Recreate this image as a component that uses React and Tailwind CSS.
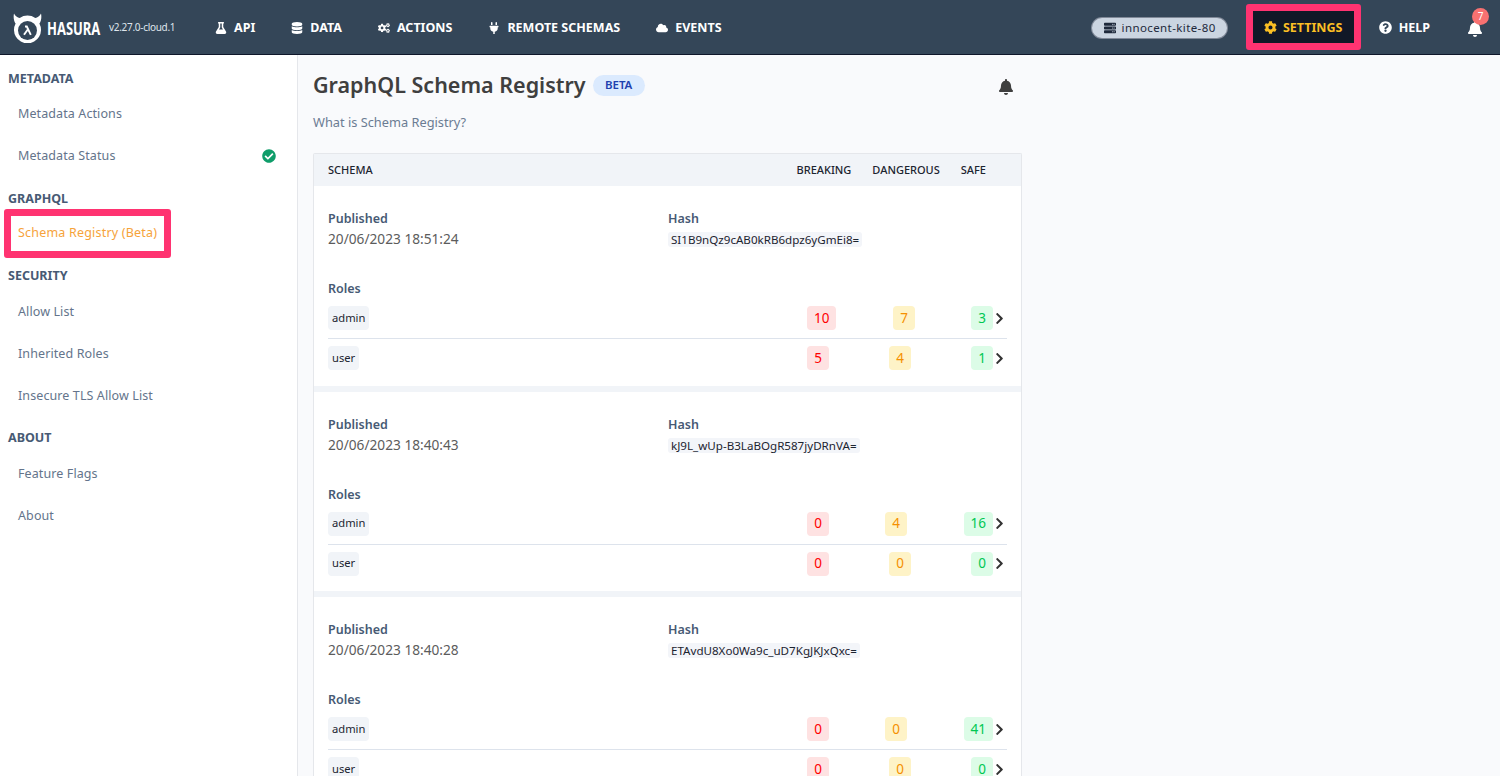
import React from "react";
import { FaFlask, FaDatabase, FaCogs, FaPlug, FaCloud, FaCog, FaQuestionCircle, FaBell, FaServer, FaCheckCircle, FaChevronRight } from "react-icons/fa";

const font = "font-['Noto_Sans',sans-serif]";

function Logo() {
  return (
    <svg width="29" height="30" viewBox="0 0 29 30" className="text-white shrink-0">
      <path d="M1 0.500 C0.200 4 0.800 8 2.600 10.500 A13.500 13.500 0 1 0 26.400 10.500 C28.200 8 28.800 4 28 0.500 C26.800 3.200 24.500 4.600 22.300 5 A13.500 13.500 0 0 0 6.700 5 C4.500 4.600 2.200 3.200 1 0.500Z" fill="currentColor" />
      <circle cx="14.500" cy="17.500" r="9.500" fill="#344658" />
      <path d="M12 13.500 H13.800 L17.800 21.800" fill="none" stroke="currentColor" strokeWidth="1.900" />
      <path d="M14.800 16.500 L11 21.800" fill="none" stroke="currentColor" strokeWidth="1.900" />
    </svg>
  );
}

function NavItem({ icon: Icon, label, size = 12, cls }) {
  return (
    <div className={`flex items-center gap-[7px] text-white font-bold text-[12.500px] ${cls}`}>
      <Icon size={size} />
      <span className="mt-[1px]">{label}</span>
    </div>
  );
}

function SideHead({ children }) {
  return <div className="text-[12.500px] font-bold text-[#475a74] leading-[18px] pl-[8px] uppercase">{children}</div>;
}

function SideItem({ children, right }) {
  return (
    <div className="flex items-center justify-between h-[42px] pl-[18px] pr-[21px] text-[12.500px] tracking-[0.1px] text-[#64748b]">
      <span>{children}</span>
      {right}
    </div>
  );
}

function Chip({ tone, children }) {
  const tones = {
    red: "bg-[#fee2e2] text-[#ff0000]",
    amber: "bg-[#fef3c7] text-[#f59000]",
    green: "bg-[#dcfce7] text-[#00c853]",
  };
  return <span className={`flex items-center justify-center h-[24px] rounded-[4px] text-[13.500px] px-[7px] min-w-[22px] ${tones[tone]}`}>{children}</span>;
}

function RoleRow({ role, b, d, s, dCls, last }) {
  return (
    <div className={`flex items-center ${last ? "h-[38px]" : "h-[41px] border-b border-[#dde3ec]"}`}>
      <span className="bg-[#f1f4f8] rounded-[4px] h-[24px] flex items-center px-[4px] text-[11.200px] text-[#1c2430]">{role}</span>
      <div className="ml-auto flex items-center w-[200px]">
        <div className="w-[60px] flex"><Chip tone="red">{b}</Chip></div>
        <div className={`w-[48px] flex justify-end ${dCls}`}><Chip tone="amber">{d}</Chip></div>
        <div className="w-[78px] flex justify-end"><Chip tone="green">{s}</Chip></div>
        <FaChevronRight size={13} className="text-[#333]" />
      </div>
    </div>
  );
}

function Item({ time, hash, rows, divider }) {
  return (
    <>
      <div className="bg-white h-[199.500px] px-[14px] pt-[24px]">
        <div className="flex">
          <div className="w-[340px]">
            <div className="text-[12.500px] font-semibold text-[#475a74] leading-[18px]">Published</div>
            <div className="text-[13.700px] text-[#5c5c5c] leading-[18px] mt-[2px]">{time}</div>
          </div>
          <div>
            <div className="text-[12.500px] font-semibold text-[#475a74] leading-[18px]">Hash</div>
            <div className="mt-[4px] w-fit bg-[#f3f5f9] rounded-[3px] px-[3px] h-[15px] leading-[15px] text-[11.600px] text-[#1c2430]">{hash}</div>
          </div>
        </div>
        <div className="mt-[32px] text-[12.500px] font-semibold text-[#475a74] leading-[18px]">Roles</div>
        <div>
          {rows.map((r, i) => <RoleRow key={r.role} {...r} last={i === rows.length - 1} />)}
        </div>
      </div>
      {divider && <div className="h-[6px] bg-[#f1f4f8]" />}
    </>
  );
}

export default function App() {
  return (
    <div className={`h-[776px] w-[1500px] overflow-hidden flex flex-col bg-[#f9fafc] ${font}`}>
      <header className="h-[55px] shrink-0 bg-[#344658] border-b border-[#0f172a] flex items-center pt-[1px] pl-[13px] pr-[17px]">
        <Logo />
        <span className="ml-[5px] w-[52px] inline-block whitespace-nowrap origin-left scale-x-[0.72] text-white font-bold text-[18px] leading-none">HASURA</span>
        <span className="ml-[10px] w-[66px] whitespace-nowrap text-[#dfe5ec] text-[10px] tracking-[-0.3px]">v2.27.0-cloud.1</span>
        <NavItem icon={FaFlask} label="API" cls="ml-[40px]" />
        <NavItem icon={FaDatabase} label="DATA" cls="ml-[36px]" />
        <NavItem icon={FaCogs} label="ACTIONS" cls="ml-[36px]" />
        <NavItem icon={FaPlug} label="REMOTE SCHEMAS" cls="ml-[36px]" />
        <NavItem icon={FaCloud} label="EVENTS" cls="ml-[36px]" />
        <div className="ml-auto flex items-center h-[22px] rounded-full bg-[#cbd5e1] border border-[#0f172a]/40 pl-[12px] pr-[11px] gap-[6px] text-[11.500px] tracking-[0.4px] text-[#1e293b]">
          <FaServer size={12} />
          <span>innocent-kite-80</span>
        </div>
        <div className="ml-[18px] -mt-[1px] flex items-center gap-[6px] h-[46px] w-[115px] justify-center rounded-[3px] border-[7px] border-[#ff3371] bg-[#111827] text-[#fbbf24] font-bold text-[12.500px]">
          <FaCog size={13} />
          <span className="mt-[2px]">SETTINGS</span>
        </div>
        <NavItem icon={FaQuestionCircle} label="HELP" size={13} cls="ml-[18px]" />
        <div className="relative ml-[37px] mt-[3px] text-white">
          <FaBell size={16} />
          <span className="absolute -top-[13px] left-[5px] w-[17px] h-[17px] rounded-full bg-[#f87171] text-white text-[10px] flex items-center justify-center">7</span>
        </div>
      </header>
      <div className="flex flex-1 min-h-0">
        <aside className="w-[298px] shrink-0 bg-white border-r border-[#e5e7eb] pt-[15px]">
          <SideHead>Metadata</SideHead>
          <div className="mt-[5px]">
            <SideItem>Metadata Actions</SideItem>
            <SideItem right={<FaCheckCircle size={14} className="text-[#0f9d6a]" />}>Metadata Status</SideItem>
          </div>
          <div className="mt-[13px]"><SideHead>GraphQL</SideHead></div>
          <div className="mt-[1px] ml-[4px] w-[167px] h-[49px] rounded-[3px] border-[7px] border-[#ff3371] flex items-center pl-[7px] text-[12.500px] tracking-[0.2px] text-[#f6a33b]">Schema Registry (Beta)</div>
          <div className="mt-[9px]"><SideHead>Security</SideHead></div>
          <div className="mt-[6px]">
            <SideItem>Allow List</SideItem>
            <SideItem>Inherited Roles</SideItem>
            <SideItem>Insecure TLS Allow List</SideItem>
          </div>
          <div className="mt-[12px]"><SideHead>About</SideHead></div>
          <div className="mt-[6px]">
            <SideItem>Feature Flags</SideItem>
            <SideItem>About</SideItem>
          </div>
        </aside>
        <main className="flex-1 min-w-0 pl-[15px] pt-[14px]">
          <div className="w-[709px]">
            <div className="flex items-center h-[32px]">
              <h1 className="text-[21.500px] font-semibold text-[#3f3f3f]">GraphQL Schema Registry</h1>
              <span className="ml-[7px] h-[21px] w-[52px] flex items-center justify-center rounded-full bg-[#dbeafe] text-[#1e40af] text-[11.500px] font-semibold">BETA</span>
              <FaBell size={16} className="ml-auto mr-[8px] mt-[4px] text-[#3f3f3f]" />
            </div>
            <p className="mt-[12px] text-[12.800px] text-[#6b7c93] leading-[18px]">What is Schema Registry?</p>
            <div className="mt-[22px] border border-[#e5e7eb] border-b-0 rounded-t-[2px]">
              <div className="h-[32px] bg-[#f1f4f8] flex items-center pt-[1px] px-[14px] text-[11px] font-medium text-[#1c2430]">
                <span>SCHEMA</span>
                <span className="ml-auto">BREAKING</span>
                <span className="ml-[21px]">DANGEROUS</span>
                <span className="ml-[21px] mr-[21px]">SAFE</span>
              </div>
              <Item time="20/06/2023 18:51:24" hash="SI1B9nQz9cAB0kRB6dpz6yGmEi8=" divider rows={[
                { role: "admin", b: 10, d: 7, s: 3, dCls: "" },
                { role: "user", b: 5, d: 4, s: 1, dCls: "pr-[4px]" },
              ]} />
              <Item time="20/06/2023 18:40:43" hash="kJ9L_wUp-B3LaBOgR587jyDRnVA=" divider rows={[
                { role: "admin", b: 0, d: 4, s: 16, dCls: "pr-[8px]" },
                { role: "user", b: 0, d: 0, s: 0, dCls: "pr-[4px]" },
              ]} />
              <Item time="20/06/2023 18:40:28" hash="ETAvdU8Xo0Wa9c_uD7KgJKJxQxc=" rows={[
                { role: "admin", b: 0, d: 0, s: 41, dCls: "pr-[8px]" },
                { role: "user", b: 0, d: 0, s: 0, dCls: "pr-[4px]" },
              ]} />
            </div>
          </div>
        </main>
      </div>
    </div>
  );
}
